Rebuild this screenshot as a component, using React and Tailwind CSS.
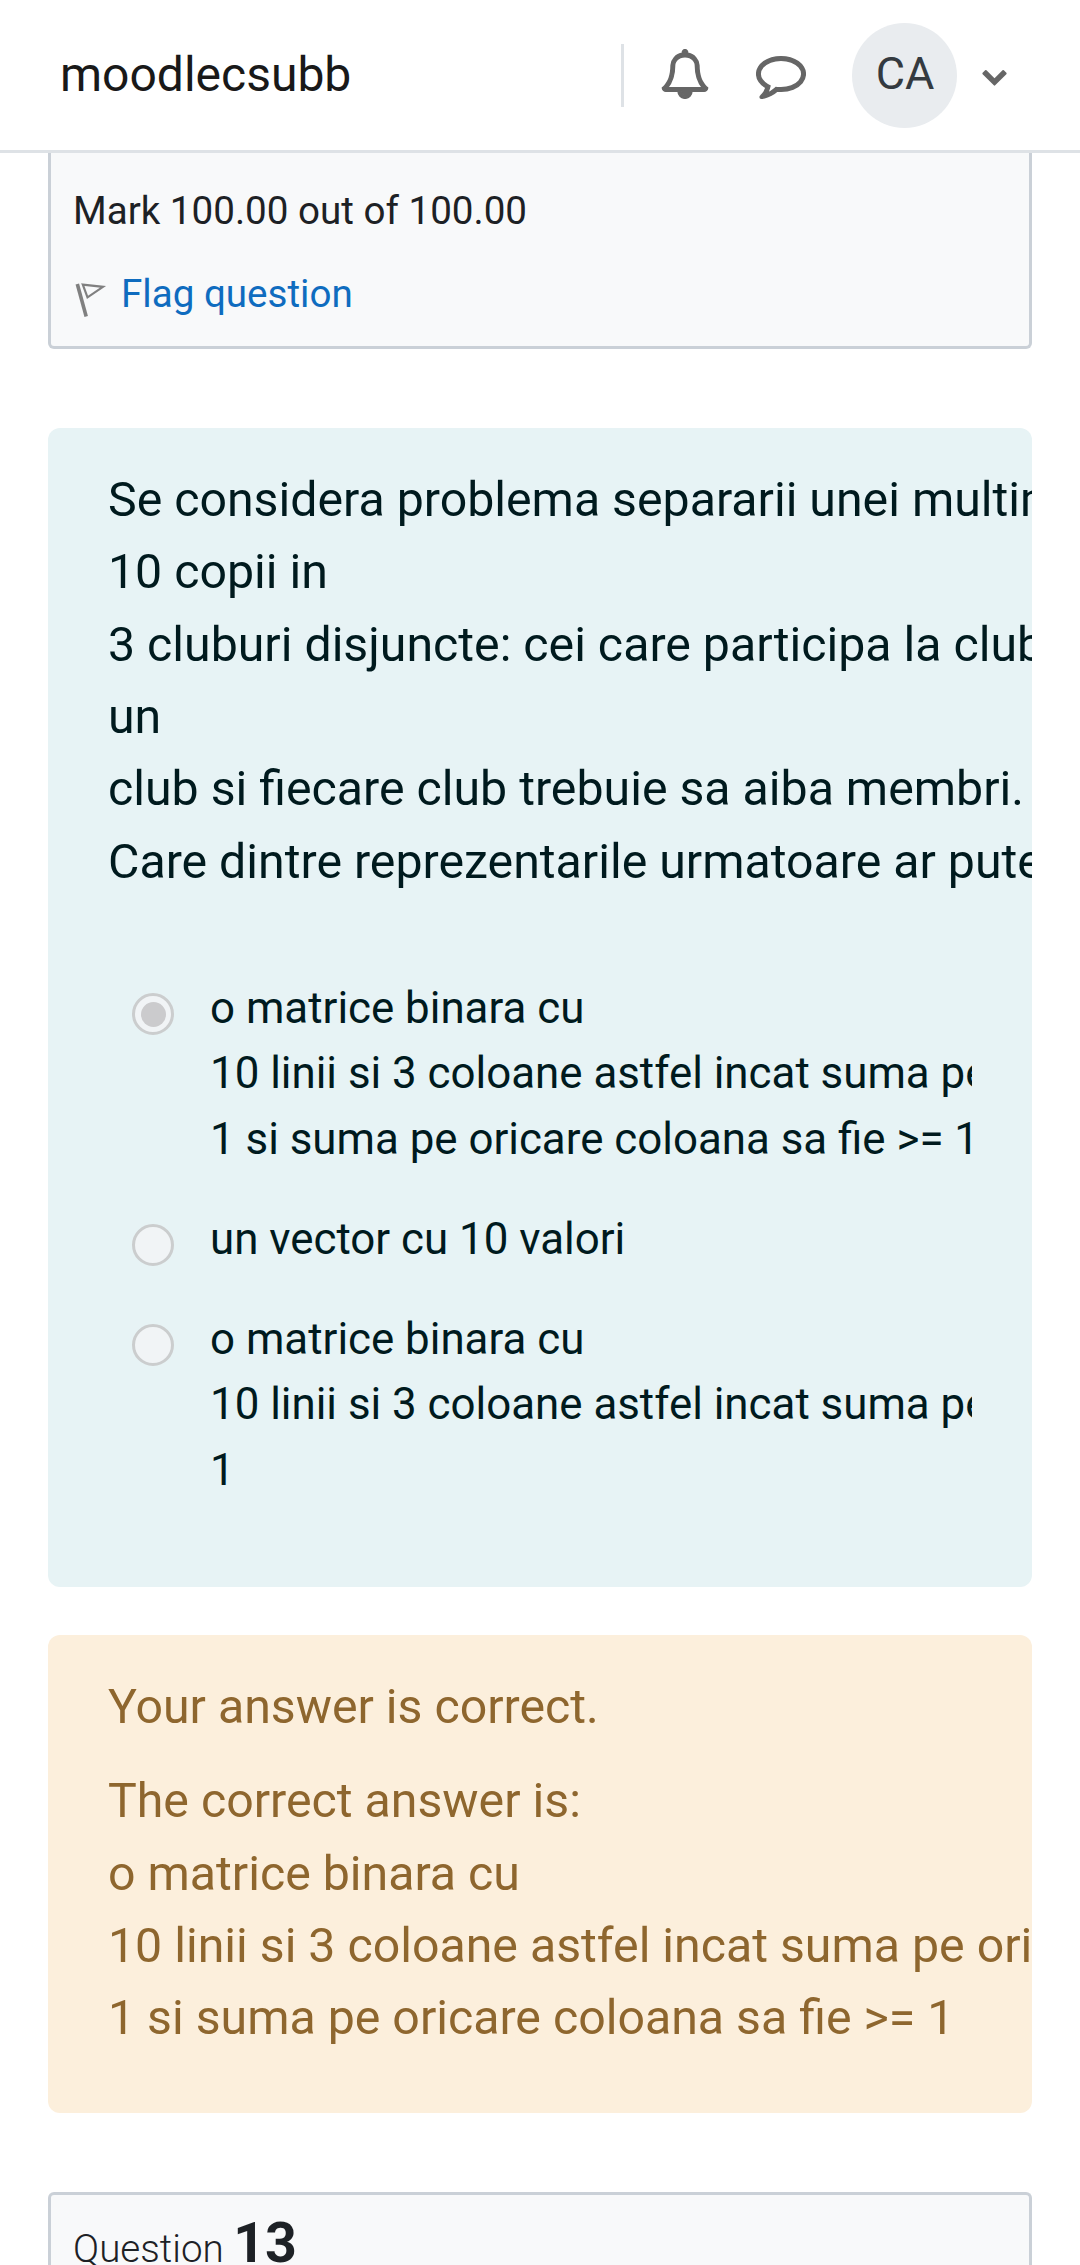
const BELL =
  "M912 1696q0-16-16-16-59 0-101.5-42.5t-42.5-101.5q0-16-16-16t-16 16q0 73 51.5 124.5t124.5 51.5q16 0 16-16zm-666-288h1300q-266-300-266-832 0-51-24-105t-69-103-121.5-80.5-169.5-31.5-169.5 31.5-121.5 80.5-69 103-24 105q0 532-266 832zm1482 0q0 52-38 90t-90 38h-448q0 106-75 181t-181 75-181-75-75-181h-448q-52 0-90-38t-38-90q50-42 91-88t85-119.5 74.5-158.5 50-206 19.5-260q0-152 117-282.5t307-158.5q-8-19-8-39 0-40 28-68t68-28 68 28 28 68q0 20-8 39 190 28 307 158.5t117 282.5q0 139 19.5 260t50 206 74.5 158.5 85 119.5 91 88z";
const COMMENT =
  "M896 384q-204 0-381.5 69.5t-282 187.5-104.5 255q0 112 71.5 213.5t201.5 175.5l87 50-27 96q-24 91-70 172 152-63 275-171l43-38 57 6q69 8 130 8 204 0 381.5-69.5t282-187.5 104.5-255-104.5-255-282-187.5-381.5-69.5zm896 512q0 174-120 321.5t-326 233-450 85.5q-70 0-145-8-198 175-460 242-49 14-114 22h-5q-15 0-27-10.5t-16-27.5v-1q-3-4-.5-12t2-10 4.5-9.5l6-9 7-8.5 8-9q7-8 31-34.5t34.5-38 31-39.5 32.5-51 27-59 26-76q-157-89-247.5-220t-90.5-281q0-130 71-248.5t191-204.5 286-136.5 348-50.5 348 50.5 286 136.5 191 204.5 71 248.5z";
const CHEVRON =
  "M1683 808l-742 741q-19 19-45 19t-45-19l-742-741q-19-19-19-45.5t19-45.5l166-165q19-19 45-19t45 19l531 531 531-531q19-19 45-19t45 19l166 165q19 19 19 45.5t-19 45.5z";

function Icon({ d, className }) {
  return (
    <svg viewBox="0 0 1792 1792" fill="currentColor" className={className}>
      <path d={d} />
    </svg>
  );
}

function BoldIcon({ d, className }) {
  return (
    <svg viewBox="-26 -26 1844 1844" fill="currentColor" stroke="currentColor" strokeWidth="56" className={className}>
      <path d={d} />
    </svg>
  );
}

function Header() {
  return (
    <header className="flex h-[153px] shrink-0 items-start border-b-[3px] border-[#dee2e6] bg-white pl-[60px]">
      <a className="mt-[39px] w-[561px] text-[48px] leading-[72px] text-[#191919]">moodlecsubb</a>
      <div className="mt-[44px] h-[63px] w-[3px] bg-[#dee2e6]" />
      <BoldIcon d={BELL} className="mt-[49px] ml-[36px] size-[50px] text-[#666]" />
      <BoldIcon d={COMMENT} className="mt-[49px] ml-[46px] size-[50px] text-[#666]" />
      <div className="mt-[23px] ml-[46px] flex size-[105px] items-center justify-center rounded-full bg-[#e9ecef] pb-[4px] pl-px text-[45px] leading-[60px] text-[#343a40]">
        CA
      </div>
      <Icon d={CHEVRON} className="mt-[62px] ml-[24px] size-[27px] text-[#666]" />
    </header>
  );
}

function FlagIcon() {
  return (
    <svg viewBox="0 0 48 48" className="mt-[10px] size-[48px]" fill="none" stroke="#808080">
      <path d="M4.3 9 L13.2 41.5" strokeWidth="3.6" />
      <path d="M9.8 9.6 L30 11.8 L14.5 22.4 Z" strokeWidth="2.2" />
    </svg>
  );
}

function Radio({ checked }) {
  return (
    <span className="mt-[17px] flex size-[42px] shrink-0 items-center justify-center rounded-full border-[3px] border-[#cbcdce] bg-[#f1f4f6]">
      {checked && <span className="size-[25px] rounded-full bg-[#cbcbcd]" />}
    </span>
  );
}

function Option({ lines, checked }) {
  return (
    <div className="flex gap-[36px]">
      <Radio checked={checked} />
      <div className="min-w-0 flex-1 overflow-hidden text-[43.85px] leading-[65.25px] whitespace-pre">
        {lines.map((l) => (
          <div key={l}>{l}</div>
        ))}
      </div>
    </div>
  );
}

export default function App() {
  return (
    <div className="flex h-[2265px] w-[1080px] flex-col overflow-hidden bg-white font-[Roboto,sans-serif]">
      <Header />
      <main className="flex flex-col px-[48px]">
        <section className="h-[196px] rounded-b-[6px] border-[3px] border-t-0 border-[#cad0d7] bg-[#f8f9fa] pl-[22px] text-[38.6px] leading-[58px] text-[#1d2125]">
          <div className="mt-[29px]">Mark 100.00 out of 100.00</div>
          <div className="mt-[25px] flex h-[58px]">
            <FlagIcon />
            <a className="text-[#0f6cbf]">Flag question</a>
          </div>
        </section>

        <section className="mt-[79px] h-[1159px] overflow-hidden rounded-[12px] bg-[#e7f3f5] pt-[36px] pl-[60px] text-[#001a1e]">
          <div className="text-[48.25px] leading-[72.35px] whitespace-pre">
            <div>Se considera problema separarii unei multim</div>
            <div>10 copii in</div>
            <div>3 cluburi disjuncte: cei care participa la club</div>
            <div>un</div>
            <div>club si fiecare club trebuie sa aiba membri.</div>
            <div>Care dintre reprezentarile urmatoare ar pute</div>
          </div>
          <div className="mt-[78px] mr-[60px] ml-[24px] flex flex-col gap-[35px]">
            <Option
              checked
              lines={[
                "o matrice binara cu",
                "10 linii si 3 coloane astfel incat suma pe",
                "1 si suma pe oricare coloana sa fie >= 1",
              ]}
            />
            <Option lines={["un vector cu 10 valori"]} />
            <Option
              lines={["o matrice binara cu", "10 linii si 3 coloane astfel incat suma pe", "1"]}
            />
          </div>
        </section>

        <section className="mt-[48px] h-[478px] overflow-hidden rounded-[12px] bg-[#fcefdc] pt-[36px] pl-[60px] text-[48.25px] leading-[72.35px] whitespace-pre text-[#8e662e]">
          <div>Your answer is correct.</div>
          <div className="mt-[22px]">The correct answer is:</div>
          <div>o matrice binara cu</div>
          <div>10 linii si 3 coloane astfel incat suma pe ori</div>
          <div>{"1 si suma pe oricare coloana sa fie >= 1"}</div>
        </section>

        <section className="mt-[79px] h-[200px] rounded-t-[6px] border-[3px] border-b-0 border-[#cad0d7] bg-[#f8f9fa] pt-[14px] pl-[22px] text-[#1d2125]">
          <h3 className="text-[38.6px] leading-[70px] font-light">
            Question <span className="text-[55.5px] font-bold">13</span>
          </h3>
        </section>
      </main>
    </div>
  );
}
